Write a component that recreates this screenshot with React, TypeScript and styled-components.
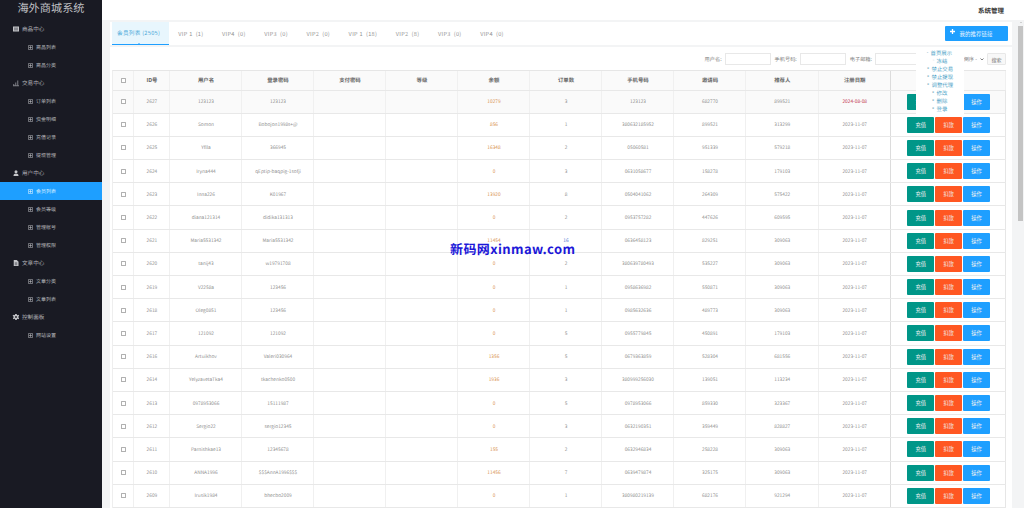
import React from "react";
import styled, { createGlobalStyle } from "styled-components";

const Global = createGlobalStyle`
  html, body { margin: 0; padding: 0; height: 100%; overflow: hidden; background: #f3f4f5; }
  #root { height: 100%; }
  * { box-sizing: border-box; }
  body { text-rendering: geometricPrecision; }
`;

const FONT = `"Noto Sans CJK SC", "Noto Sans", sans-serif`;

const Page = styled.div`
  display: flex; width: 1024px; height: 508px; overflow: hidden; position: relative;
  font-family: ${FONT}; background: #f3f4f5;
`;
const Sidebar = styled.aside`
  width: 102px; flex: none; background: #191a23; color: #b4b5ba;
  display: flex; flex-direction: column;
`;
const Logo = styled.div`
  height: 20px; display: flex; justify-content: center; align-items: flex-start;
  padding-top: 1px; font-size: 11.2px; line-height: 15px; color: #c0c1c5;
`;
const MenuRow = styled.div<{ $active?: boolean; $group?: boolean }>`
  height: 18px; flex: none; display: flex; align-items: center;
  padding-left: ${(p) => (p.$group ? "12.5px" : "28px")};
  gap: ${(p) => (p.$group ? "3.5px" : "3px")};
  font-size: ${(p) => (p.$group ? "5.6px" : "5px")};
  background: ${(p) => (p.$active ? "#1e9fff" : "transparent")};
  color: ${(p) => (p.$active ? "#dff1ff" : "#b4b5ba")};
`;
const Main = styled.div`
  flex: 1; min-width: 0; display: flex; flex-direction: column;
`;
const TopBar = styled.header`
  height: 20px; flex: none; background: #fff; display: flex; align-items: center;
  justify-content: flex-end; padding-right: 20px;
`;
const Admin = styled.span`
  font-size: 6.5px; font-weight: 700; color: #333;
`;
const Body = styled.div`
  flex: 1; min-height: 0; display: flex; padding-top: 2px;
`;
const Card = styled.div`
  width: 902px; margin-left: 8px; flex: none; display: flex; flex-direction: column;
`;
const TabBar = styled.div`
  height: 23px; flex: none; background: #fff; display: flex; align-items: stretch;
  padding: 0 4px 0 2px; margin-bottom: 1.5px;
`;
const Tab = styled.div<{ $active?: boolean }>`
  display: flex; align-items: center; position: relative; white-space: pre;
  padding: ${(p) => (p.$active ? "0 0 0 5px" : "0 9.3px")};
  width: ${(p) => (p.$active ? "57px" : "auto")};
  font-size: 5.6px; letter-spacing: 0.3px;
  color: ${(p) => (p.$active ? "#4aa8d8" : "#929292")};
  background: ${(p) => (p.$active ? "#e8f6fd" : "transparent")};
  border-bottom: ${(p) => (p.$active ? "1px solid #1e9fff" : "0")};
`;
const Caret = styled.i`
  position: absolute; left: 26px; bottom: 0; width: 0; height: 0;
  border: 1.5px solid transparent; border-bottom-color: #1e9fff; border-top-width: 0;
`;
const RefButton = styled.button`
  margin: 4px 0 0 auto; width: 63px; height: 15px; border: 0; border-radius: 1px;
  background: #1e9fff; color: #e8f5ff; font: 5.5px ${FONT};
  display: flex; align-items: center; padding: 0 0 0 5px; gap: 4.5px;
`;
const Panel = styled.div`
  flex: 1; min-height: 0; background: #fff; padding: 6.5px 6px 0 2px; position: relative;
`;
const Filter = styled.div`
  height: 12px; display: flex; justify-content: flex-end; align-items: center;
  margin-bottom: 5px; font-size: 5.2px; color: #7d7d7d;
`;
const Label = styled.label`
  margin-right: 3px; white-space: nowrap;
`;
const Input = styled.input`
  width: 46px; height: 12px; border: 1px solid #e8e8e8; background: #fff; padding: 0;
  margin-right: 4px;
`;
const Sort = styled.div`
  width: 64px; display: flex; justify-content: flex-end; align-items: center; gap: 3px;
  padding-right: 1px; margin-left: -4px; color: #7d7d7d;
`;
const SearchBtn = styled.button`
  width: 19px; height: 12px; margin-left: 2px; border: 1px solid #e8e8e8; background: #f8f8f8;
  color: #707070; font: 5px ${FONT}; padding: 0; border-radius: 1px;
`;
const Table = styled.div`
  border-top: 1px solid #e6e6e6; border-left: 1px solid #eee; width: 894px;
`;
const Row = styled.div<{ $head?: boolean; $shade?: boolean }>`
  display: grid;
  grid-template-columns: 21.3px 36.2px repeat(8, 72px) 72.5px 72.5px 115px;
  height: ${(p) => (p.$head ? "19.5px" : "23.2px")};
  background: ${(p) => (p.$head || p.$shade ? "#fafafa" : "#fff")};
  border-bottom: 1px solid #e8e8e8;
`;
const Cell = styled.div<{ $tone?: string; $sep?: boolean }>`
  display: flex; align-items: center; justify-content: center; white-space: nowrap;
  font-size: 4.8px; color: ${(p) => p.$tone || "#8f8f8f"};
  border-right: 1px solid ${(p) => (p.$sep ? "#dcdcdc" : "#f0f0f0")};
`;
const HeadCell = styled(Cell)`
  font-size: 5.4px; font-weight: 700; color: #666;
`;
const Check = styled.span`
  width: 5px; height: 5px; border: 0.7px solid #b0b0b0; border-radius: 0.5px; background: #fff;
`;
const Actions = styled.div`
  display: flex; align-items: center; gap: 1.5px; padding-left: 16px;
  border-right: 1px solid #e6e6e6;
`;
const ActionBtn = styled.button<{ $bg: string }>`
  width: 26.4px; height: 16px; border: 0; border-radius: 1px; padding: 0;
  background: ${(p) => p.$bg}; color: #f0f0f0; font: 5.3px ${FONT};
`;
const Dropdown = styled.ul`
  position: absolute; left: 806px; top: 0.5px; width: 48px; height: 68.5px; margin: 0;
  padding: 1.5px 0 0; list-style: none; background: #fff; z-index: 2;
`;
const DropItem = styled.li<{ $indent: number }>`
  height: 8px; display: flex; align-items: center; gap: 1.5px; font-size: 5.4px;
  line-height: 8px; color: #4b9fc6; white-space: nowrap; padding-left: ${(p) => p.$indent}px;
`;
const Mark = styled.i`
  flex: none; font-style: normal; font-size: 3.5px; width: 3px; text-align: center; color: #6a9fb8;
`;
const Watermark = styled.div`
  position: absolute; left: 450px; top: 240px; z-index: 3; font-size: 13px; line-height: 18px;
  font-weight: 700; color: #1c17d8; white-space: nowrap; letter-spacing: 0.4px;
`;
const Track = styled.div`
  width: 12px; flex: none; display: flex; flex-direction: column; align-items: flex-end;
  padding: 0 1px 0 0; margin-top: -2px;
`;
const ArrowUp = styled.i`
  width: 0; height: 0; margin: 2px 1.5px 3px 0; border: 1.5px solid transparent;
  border-bottom-color: #a9a9a9; border-top-width: 0;
`;
const Thumb = styled.div`
  width: 5px; height: 195px; background: #c4c4c4;
`;

const ItemIcon = () => (
  <svg width="5" height="5" viewBox="0 0 10 10" fill="none" stroke="currentColor" strokeWidth="1.3">
    <rect x="0.7" y="0.7" width="8.6" height="8.6" rx="1" />
    <path d="M5 2.2v5.6M2.2 5h5.6" />
  </svg>
);
const GroupIcon = ({ kind }: { kind: string }) => {
  const paths: Record<string, React.ReactNode> = {
    list: (
      <>
        <rect x="0" y="1" width="12" height="10" fill="#c4c5c9" />
        <path d="M2 4h8M2 6h8M2 8h8" stroke="#191a23" strokeWidth="0.8" />
      </>
    ),
    bars: <path d="M0 11.5h12M1.5 11V8M5.5 11V5M9.5 11V1" stroke="#c4c5c9" strokeWidth="1.2" />,
    user: (
      <>
        <circle cx="6" cy="3.5" r="3" fill="#c4c5c9" />
        <path d="M1 12c0-3.5 2-5 5-5s5 1.500 5 5z" fill="#c4c5c9" />
      </>
    ),
    file: (
      <>
        <path d="M1.500 0h6l3.500 3.500V12h-9.500z" fill="#c4c5c9" />
        <path d="M3.500 5.500h5M3.500 7.500h5M3.500 9.500h5" stroke="#191a23" strokeWidth="0.8" />
      </>
    ),
    gear: (
      <>
        <path d="M4.500 0h3l.4 1.800 1.700.7 1.600-1 1 2-1.300 1.300v2.400l1.300 1.300-1 2-1.600-1-1.700.7-.4 1.800h-3l-.4-1.800-1.700-.7-1.600 1-1-2 1.300-1.300V4.800L-.700 3.500l1-2 1.600 1 1.700-.7z" fill="#c4c5c9" />
        <circle cx="6" cy="6" r="1.800" fill="#191a23" />
      </>
    ),
  };
  return (
    <svg width="6" height="6" viewBox="0 0 12 12" style={{ overflow: "visible" }}>
      {paths[kind]}
    </svg>
  );
};

const menu: { kind: string; label: string; items: string[] }[] = [
  { kind: "list", label: "商品中心", items: ["商品列表", "商品分类"] },
  { kind: "bars", label: "交易中心", items: ["订单列表", "资金明细", "充值记录", "提现管理"] },
  { kind: "user", label: "用户中心", items: ["会员列表", "会员等级", "管理帐号", "管理权限"] },
  { kind: "file", label: "文章中心", items: ["文章分类", "文章列表"] },
  { kind: "gear", label: "控制面板", items: ["网站设置"] },
];

const tabs = ["VIP 1  (1)", "VIP4  (0)", "VIP3  (0)", "VIP2  (0)", "VIP 1  (18)", "VIP2  (8)", "VIP3  (0)", "VIP4  (0)"];

const headers = ["ID号", "用户名", "登录密码", "支付密码", "等级", "余额", "订单数", "手机号码", "邀请码", "推荐人", "注册日期"];

const rows: string[][] = [
  ["2627", "123123", "123123", "10279", "3", "123123", "682770", "899521", "2024-08-08"],
  ["2626", "Somon", "Bobojon1998s+@", "856", "1", "380632185952", "899521", "313299", "2023-11-07"],
  ["2625", "Yflla", "366945", "16348", "2", "05060581", "951339", "579218", "2023-11-07"],
  ["2624", "Iryna444", "qEptip-baqpig-1sofji", "0", "3", "0631058677", "158278", "179103", "2023-11-07"],
  ["2623", "Inna226", "K01967", "13920", "8", "0504041062", "264309", "575422", "2023-11-07"],
  ["2622", "diana121314", "didika131313", "0", "2", "0953757282", "447626", "609595", "2023-11-07"],
  ["2621", "Maria5531342", "Maria5531342", "11454", "16", "0636458123", "829251", "309063", "2023-11-07"],
  ["2620", "tanij43", "w19791708", "0", "2", "380639780493", "535227", "309063", "2023-11-07"],
  ["2619", "V2258a", "123456", "0", "1", "0958636982", "550871", "309063", "2023-11-07"],
  ["2618", "Oleg0851", "123456", "0", "1", "0985632636", "489773", "309063", "2023-11-07"],
  ["2617", "121092", "121092", "0", "5", "0955779845", "450891", "179103", "2023-11-07"],
  ["2616", "Artuikhov", "Valeri030964", "1356", "5", "0679363859", "528304", "681556", "2023-11-07"],
  ["2614", "YelyzavetaTka4", "tkachenko0500", "1936", "3", "380999256030", "139051", "113234", "2023-11-07"],
  ["2613", "0978953066", "15111987", "0", "5", "0978953066", "859330", "323367", "2023-11-07"],
  ["2612", "Sergio22", "sergio12345", "0", "3", "0632190351", "359449", "828827", "2023-11-07"],
  ["2611", "Parnishkae13", "12345678", "155", "2", "0632946834", "258228", "309063", "2023-11-07"],
  ["2610", "ANNA1996", "$$$AnnA1996$$$", "11456", "7", "0639479874", "325175", "309063", "2023-11-07"],
  ["2609", "Irusik1984", "bhecbo2009", "0", "1", "380980219139", "682176", "921294", "2023-11-07"],
];

const tree: { label: string; indent: number; mark: string }[] = [
  { label: "首页展示", indent: 10, mark: "⌄" },
  { label: "冻结", indent: 16, mark: "–" },
  { label: "禁止交易", indent: 11, mark: "▸" },
  { label: "禁止提现", indent: 11, mark: "▸" },
  { label: "调整代理", indent: 11, mark: "▸" },
  { label: "修改", indent: 16, mark: "▸" },
  { label: "删除", indent: 16, mark: "▸" },
  { label: "登录", indent: 16, mark: "▸" },
];

export default function App() {
  return (
    <Page>
      <Global />
      <Sidebar>
        <Logo>海外商城系统</Logo>
        {menu.map((g) => (
          <React.Fragment key={g.label}>
            <MenuRow $group>
              <GroupIcon kind={g.kind} />
              {g.label}
            </MenuRow>
            {g.items.map((it) => (
              <MenuRow key={it} $active={it === "会员列表"}>
                <ItemIcon />
                {it}
              </MenuRow>
            ))}
          </React.Fragment>
        ))}
      </Sidebar>
      <Main>
        <TopBar>
          <Admin>系统管理</Admin>
        </TopBar>
        <Body>
          <Card>
            <TabBar>
              <Tab $active>
                会员列表 (2505)
                <Caret />
              </Tab>
              {tabs.map((t, i) => (
                <Tab key={i}>{t}</Tab>
              ))}
              <RefButton>
                <svg width="5" height="5" viewBox="0 0 10 10" style={{ marginTop: -4 }}>
                  <path d="M5 0v10M0 5h10" stroke="#fff" strokeWidth="2.600" />
                </svg>
                我的推荐链接
              </RefButton>
            </TabBar>
            <Panel>
              <Filter>
                <Label>用户名:</Label>
                <Input />
                <Label>手机号码:</Label>
                <Input />
                <Label>电子邮箱:</Label>
                <Input />
                <Sort>
                  倒序 -
                  <svg width="4" height="3" viewBox="0 0 8 6" fill="none" stroke="#555" strokeWidth="1.500">
                    <path d="M1 1l3 3 3-3" />
                  </svg>
                </Sort>
                <SearchBtn>搜索</SearchBtn>
              </Filter>
              <Dropdown>
                {tree.map((t) => (
                  <DropItem key={t.label} $indent={t.indent}>
                    <Mark>{t.mark}</Mark>
                    {t.label}
                  </DropItem>
                ))}
              </Dropdown>
              <Table>
                <Row $head>
                  <Cell>
                    <Check />
                  </Cell>
                  {headers.map((h, i) => (
                    <HeadCell key={h} $sep={i === headers.length - 1}>
                      {h}
                    </HeadCell>
                  ))}
                  <HeadCell>操作</HeadCell>
                </Row>
                {rows.map((r, idx) => (
                  <Row key={r[0]} $shade={idx === 0}>
                    <Cell>
                      <Check />
                    </Cell>
                    <Cell>{r[0]}</Cell>
                    <Cell>{r[1]}</Cell>
                    <Cell>{r[2]}</Cell>
                    <Cell />
                    <Cell />
                    <Cell $tone="#d8924f">{r[3]}</Cell>
                    <Cell $tone={r[4] === "16" ? "#4a6fd0" : undefined}>{r[4]}</Cell>
                    <Cell>{r[5]}</Cell>
                    <Cell>{r[6]}</Cell>
                    <Cell>{r[7]}</Cell>
                    <Cell $sep $tone={idx === 0 ? "#c0304a" : undefined}>
                      {r[8]}
                    </Cell>
                    <Actions>
                      <ActionBtn $bg="#009688">充值</ActionBtn>
                      <ActionBtn $bg="#ff5722">扣款</ActionBtn>
                      <ActionBtn $bg="#1e9fff">操作</ActionBtn>
                    </Actions>
                  </Row>
                ))}
              </Table>
            </Panel>
          </Card>
          <Track>
            <ArrowUp />
            <Thumb />
          </Track>
        </Body>
      </Main>
      <Watermark>新码网xinmaw.com</Watermark>
    </Page>
  );
}
